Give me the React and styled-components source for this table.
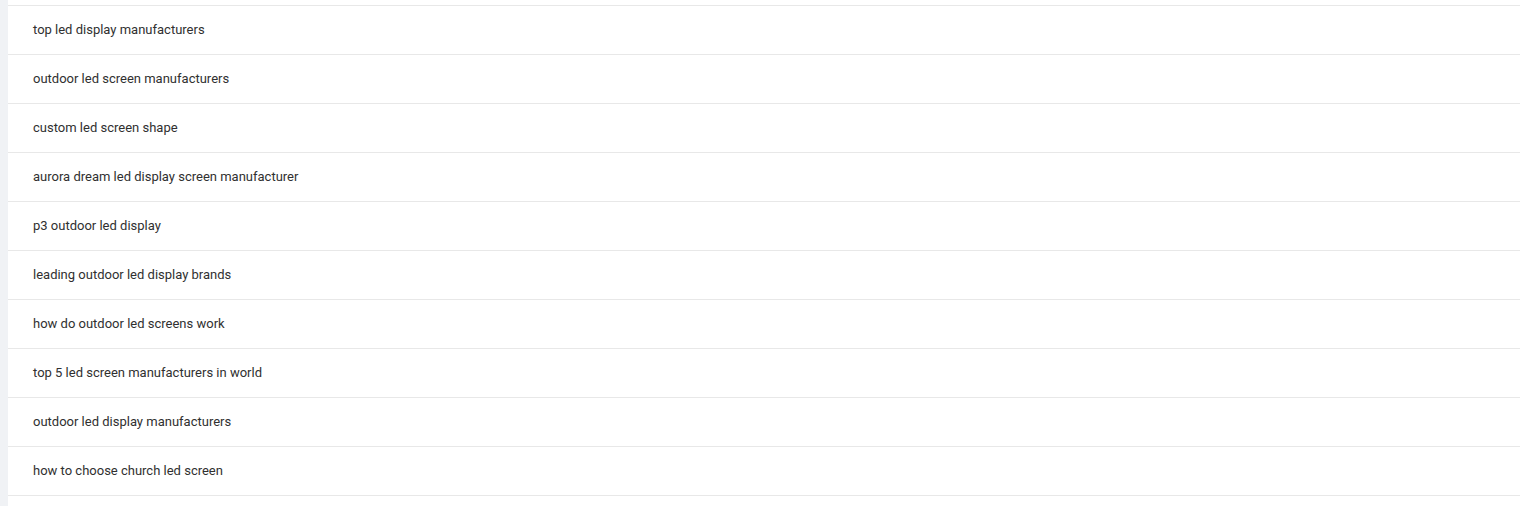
import React from "react";
import styled, { createGlobalStyle } from "styled-components";

const GlobalStyle = createGlobalStyle`
  html, body {
    margin: 0;
    padding: 0;
    background: #f0f2f5;
  }
  body {
    font-family: Roboto, "Noto Sans", "Liberation Sans", sans-serif;
  }
`;

const Page = styled.div`
  display: flex;
  height: 506px;
  overflow: hidden;
`;

const Rail = styled.div`
  width: 8px;
  flex: none;
  background: #f0f2f5;
`;

const List = styled.ul`
  flex: 1;
  list-style: none;
  margin: 0;
  padding: 0;
  background: #fff;
`;

const Spacer = styled.li`
  height: 5px;
  border-bottom: 1px solid #e8e8e8;
`;

const Row = styled.li`
  box-sizing: border-box;
  height: 49px;
  display: flex;
  align-items: center;
  padding: 0 0 2px 25px;
  border-bottom: 1px solid #e8e8e8;
  font-size: 13px;
  color: #303030;
`;

const keywords = [
  "top led display manufacturers",
  "outdoor led screen manufacturers",
  "custom led screen shape",
  "aurora dream led display screen manufacturer",
  "p3 outdoor led display",
  "leading outdoor led display brands",
  "how do outdoor led screens work",
  "top 5 led screen manufacturers in world",
  "outdoor led display manufacturers",
  "how to choose church led screen",
];

export default function App() {
  return (
    <>
      <GlobalStyle />
      <Page>
        <Rail />
        <List>
          <Spacer />
          {keywords.map((k) => (
            <Row key={k}>{k}</Row>
          ))}
        </List>
      </Page>
    </>
  );
}
